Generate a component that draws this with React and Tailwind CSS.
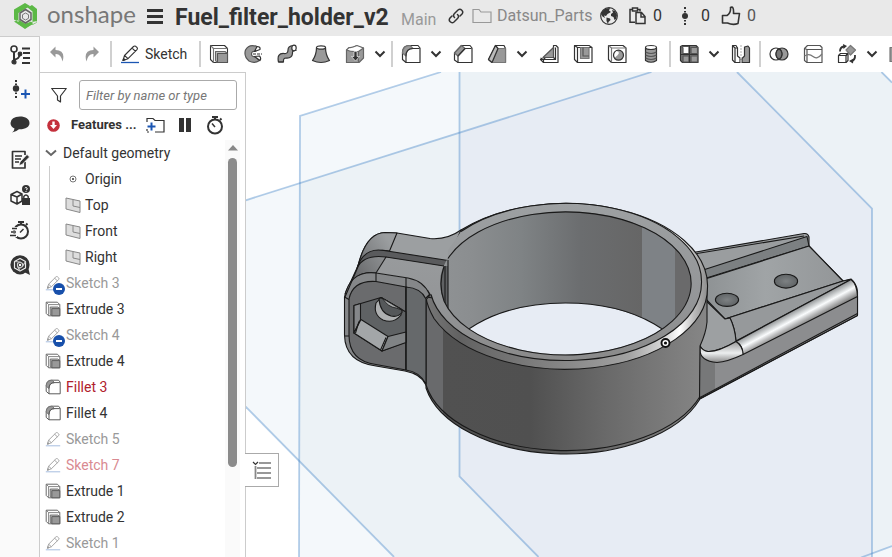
import React from "react";

const INK = "#333";
const GREY = "#999";

function Icon({ size = 20, label, children }) {
  return (
    <svg width={size} height={size} viewBox={`0 0 ${size} ${size}`} fill="none" stroke={INK} strokeWidth="1.2" strokeLinejoin="round" aria-label={label} className="shrink-0">
      {children}
    </svg>
  );
}

/* ---------- feature icons (20 x 20) ---------- */

const ExtrudeIcon = ({ size = 20, ink = INK }) => (
  <svg width={size} height={size} viewBox="0 0 20 20" fill="none" stroke={ink} strokeWidth="1.1" strokeLinejoin="round" className="shrink-0">
    <path d="M4.5 18.5 1.5 15.500V1.5h14l3 3v14z" fill="#fff" />
    <path d="M1.5 1.5l3 3V18.500M4.500 4.500H18.500" stroke="#777" />
    <path d="M8 18.500l-1.500-2V7.500h9.500l2.500 2" fill="#bbb" stroke="#666" />
    <path d="M8.500 9.500h10v9h-10z" fill={GREY} stroke="#555" />
  </svg>
);

const FilletIcon = ({ size = 20, ink = INK }) => (
  <svg width={size} height={size} viewBox="0 0 20 20" fill="none" stroke={ink} strokeWidth="1.2" strokeLinejoin="round" className="shrink-0">
    <path d="M1.500 15.500V8Q2 1.500 8 1.500h9l2 2.500v14.500H5z" fill="#fff" />
    <path d="M1.500 9Q2 1.500 9 1.500l3 3Q5 4.500 5 12z" fill={GREY} stroke="#777" />
    <path d="M5 18.500V12Q5 4.500 12 4.500h6.500" />
  </svg>
);

const PencilIcon = ({ size = 20, line = "#1b56b3", ink = INK }) => (
  <svg width={size} height={size} viewBox="0 0 20 20" fill="none" stroke={ink} strokeWidth="1.1" strokeLinejoin="round" className="shrink-0">
    <path d="M3 16.500l1.500-5L13.500 2.500Q14.500 1.500 15.700 2.300L17 3.500Q18 4.500 17 5.700L8 14.700z M4.500 11.500l3.500 3.200M12 4l3.500 3.300" />
    <path d="M3 16.500l.6-2 1.400 1.300z" fill={ink} />
    <path d="M1 18.500h18" stroke={line} strokeWidth="1.300" />
  </svg>
);

const PlaneIcon = () => (
  <svg width="16" height="16" viewBox="0 0 16 16" fill="#ddd" stroke="#888" className="shrink-0">
    <path d="M1 1l14 3v11.500L1 12z" />
    <path d="M8 2.500v6.500l7 1.500" fill="none" />
  </svg>
);

const OriginIcon = () => (
  <svg width="16" height="16" viewBox="0 0 16 16" fill="none" stroke="#777" className="shrink-0">
    <circle cx="8" cy="8" r="3" />
    <circle cx="8" cy="8" r="1" fill={INK} stroke="none" />
  </svg>
);

const RevolveIcon = () => (
  <Icon>
    <path d="M14 2.500Q6-.5 2.500 6Q.5 12.500 6 17Q11.500 20 16.500 16.500L12 12.500Q8.500 13 8.500 10T12 7.500L16 5z" fill={GREY} stroke="#555" />
    <path d="M11.500 7.500L14 2.500q3.500 0 3 3zM11.500 12.500l5-.5q2 2 .5 4.500z" fill="#fff" />
    <path d="M10 10h9" strokeDasharray="3 1" />
  </Icon>
);
const SweepIcon = () => (
  <Icon>
    <path d="M1.500 18Q-.5 9 7 9.500Q11 10 11 6Q11 2 16 1.500L19 6.500Q15 6 15.500 9.500Q15 14.500 9 14Q6 14 6.500 18z" fill={GREY} />
    <ellipse cx="17" cy="4" rx="2.200" ry="2.800" fill="#fff" />
    <path d="M1.500 18h5" />
  </Icon>
);
const LoftIcon = () => (
  <Icon>
    <path d="M5.500 3.500Q5.500 11 1.500 16.500Q10 20.500 18.500 16.500Q14.500 11 14.500 3.500z" fill={GREY} />
    <ellipse cx="10" cy="3.500" rx="4.500" ry="1.700" fill="#fff" />
  </Icon>
);
const ThickenIcon = () => (
  <Icon>
    <path d="M1.500 6L11 2l7.500 2v10L14 18.500H1.500z" fill={GREY} stroke="#666" />
    <path d="M1.500 6Q6 8 13.500 7.500L18.500 4 12 1.500Q7 4 4 3.500z" fill="#fff" stroke="#666" />
    <path d="M13.500 7.500v11" stroke="#666" />
    <path d="M9 7.500v5H6.500L10.500 17l4-4.500H12V7.500z" fill={INK} stroke="#fff" strokeWidth=".6" />
  </Icon>
);
const ChamferIcon = () => (
  <Icon>
    <path d="M1.500 16V9l7-7.500h8.500L19 4v14.500H5z" fill="#fff" />
    <path d="M1.500 9l7-7.500 3.500 3L5 12z" fill={GREY} stroke="#666" />
    <path d="M5 18.500V12l7-7.500h6.500" />
  </Icon>
);
const DraftIcon = () => (
  <Icon>
    <path d="M1.500 15.500L8.500 1.500h8.500l1.500 3v14H5z" fill="#fff" />
    <path d="M5 18.500L11 4.500h7.500v14z" fill={GREY} stroke="#777" />
    <path d="M8.500 1.500l2.500 3L5 18.500 1.500 15.500z" fill="#bbb" />
  </Icon>
);
const RibIcon = () => (
  <Icon>
    <path d="M1.500 15.500h3L14.500 5V1.500h2.500l2 2v15H4.500z" fill="#fff" />
    <path d="M4 13.500L14.500 3.500V13.500z" fill={GREY} stroke="#555" />
    <path d="M1.500 14l3 1.500h12v-12M4.500 15.500v3M16.500 15.500l-2-2" />
  </Icon>
);
const ShellIcon = () => (
  <Icon>
    <path d="M1.500 15.500v-14H16l3 2v15H4.500z" fill="#fff" />
    <path d="M1.500 1.500l3 2V18M4.500 3.500H19" />
    <path d="M7.500 3.500h8.500v11H7.500z" fill={GREY} stroke="#777" />
    <path d="M10 3.500v8.500h6" stroke="#555" />
  </Icon>
);
const HoleIcon = () => (
  <Icon>
    <path d="M1.500 15.500v-14H16l3 2.500v14.500H4.500z" fill="#fff" />
    <path d="M1.500 1.500L4.500 4v14.500M4.500 4H19" stroke="#777" />
    <circle cx="11.500" cy="11.200" r="5" fill={GREY} />
    <path d="M9.500 7Q15 8 8 13.500Q6 10 9.500 7z" fill="#fff" stroke="none" />
  </Icon>
);
const ThreadIcon = () => (
  <Icon>
    <path d="M4.500 4v12.500Q10 20 15.500 16.500V4z" fill={GREY} />
    <path d="M4.500 8q5.500 3 11 0M4.500 11q5.500 3 11 0M4.500 14q5.500 3 11 0" stroke="#555" />
    <ellipse cx="10" cy="3.500" rx="5.500" ry="2" fill="#fff" />
  </Icon>
);
const PatternIcon = () => (
  <Icon>
    <path d="M1.500 16.500v-14l2-1H17l2 2v15H3.500z" fill="#777" />
    <path d="M2.500 2.500L4 4v5.500h6V2.500z" fill="#fff" stroke="#555" />
    <path d="M12 3.500h6.500v6H12zM4 12h6v6H4zM12 12h6.500v6H12z" fill={GREY} stroke="#555" />
    <path d="M10.500 1.500v17M1.500 10.500h17" />
  </Icon>
);
const MirrorIcon = () => (
  <Icon>
    <path d="M1.500 16V1.500h3.500L6.500 4v8L9 14v4.500H4z" fill="#fff" />
    <path d="M1.500 1.500L4 4v14.500M4 4h2.500" />
    <path d="M18.500 18.500V4L17 2l-3.500 1v9L11 14.500v4z" fill={GREY} />
    <path d="M10 1v18" stroke="#bbb" strokeDasharray="2 1" />
  </Icon>
);
const BooleanIcon = () => (
  <Icon>
    <circle cx="13" cy="10" r="6" fill={GREY} />
    <circle cx="7" cy="10" r="6" />
    <path d="M10 4.800A6 6 0 0 1 10 15.200 6 6 0 0 1 10 4.800z" fill="#777" />
  </Icon>
);
const SplitIcon = () => (
  <Icon>
    <path d="M1.500 4.500l3-3H17l2 2v15H4l-2.500-2z" fill="#fff" stroke="#555" />
    <path d="M1.500 4.500L4 5.500h15M4 5.500v13" stroke="#555" />
    <path d="M1.500 12Q6 9 10 12.500T19 10" stroke="#777" />
  </Icon>
);
const TransformIcon = () => (
  <Icon>
    <path d="M1.500 18.500v-7l2-2h7l-1.500 2v7z" fill="#fff" />
    <path d="M1.500 11.500H9L11 9.500v7l-2 2" />
    <path d="M13.500 1.500l5 4.500-5 5-4.500-5z" fill={GREY} stroke="#777" />
    <path d="M3 7.500Q3 3 7 2.500M18 11Q18.500 16 14 17.500" strokeWidth="1.800" />
    <path d="M6 0l4 2-3.500 3zM16.500 14.500L12 17l4 2.500z" fill={INK} stroke="none" />
  </Icon>
);

const UndoIcon = ({ flip }) => (
  <svg width="16" height="16" viewBox="0 0 16 16" fill={GREY} className={flip ? "-scale-x-100" : ""}>
    <path d="M6.500.5L1 6l5.500 5.500V8Q12 7.500 13.500 15.500 17 4.500 6.500 4z" />
  </svg>
);

/* ---------- toolbar pieces ---------- */

function Tool({ label, children }) {
  return (
    <button type="button" aria-label={label} className="flex h-9 w-[34px] shrink-0 items-center justify-center">
      {children}
    </button>
  );
}
function Caret({ label }) {
  return (
    <button type="button" aria-label={label} className="mr-0.5 flex h-9 w-4 shrink-0 items-center justify-center">
      <svg width="12" height="8" viewBox="0 0 12 8" fill="none" stroke={INK} strokeWidth="2">
        <path d="M1.500 1.500L6 6l4.500-4.500" />
      </svg>
    </button>
  );
}
const Sep = () => <span className="mx-px h-[26px] w-0.5 shrink-0 bg-[#d0d0d0]" />;

function Toolbar() {
  return (
    <div role="toolbar" className="flex h-9 min-w-0 flex-1 items-center overflow-hidden bg-white">
      <Tool label="Undo"><UndoIcon /></Tool>
      <span className="w-px shrink-0" />
      <Tool label="Redo"><UndoIcon flip /></Tool>
      <Sep />
      <button type="button" className="flex h-9 w-[85px] shrink-0 items-center gap-[5px] pl-[7px] text-sm">
        <PencilIcon /><span>Sketch</span>
      </button>
      <Sep />
      <Tool label="Extrude"><ExtrudeIcon /></Tool>
      <Tool label="Revolve"><RevolveIcon /></Tool>
      <Tool label="Sweep"><SweepIcon /></Tool>
      <Tool label="Loft"><LoftIcon /></Tool>
      <Tool label="Thicken"><ThickenIcon /></Tool>
      <Caret label="More thicken tools" />
      <Sep />
      <Tool label="Fillet"><FilletIcon /></Tool>
      <Caret label="More fillet tools" />
      <Tool label="Chamfer"><ChamferIcon /></Tool>
      <Tool label="Draft"><DraftIcon /></Tool>
      <Caret label="More draft tools" />
      <Tool label="Rib"><RibIcon /></Tool>
      <Tool label="Shell"><ShellIcon /></Tool>
      <Tool label="Hole"><HoleIcon /></Tool>
      <Tool label="Thread"><ThreadIcon /></Tool>
      <Sep />
      <Tool label="Pattern"><PatternIcon /></Tool>
      <Caret label="More pattern tools" />
      <Tool label="Mirror"><MirrorIcon /></Tool>
      <Sep />
      <Tool label="Boolean"><BooleanIcon /></Tool>
      <Tool label="Split"><SplitIcon /></Tool>
      <Tool label="Transform"><TransformIcon /></Tool>
      <Caret label="More transform tools" />
      <Tool label="Delete face"><Icon><path d="M1 3.500h18v14H1z" fill={GREY} stroke="#777" /></Icon></Tool>
    </div>
  );
}

/* ---------- header ---------- */

function Header() {
  return (
    <header className="flex h-9 shrink-0 items-center overflow-hidden whitespace-nowrap bg-[#e9e9e9] pb-1">
      <a href="#home" aria-label="Onshape home" className="flex w-[147px] shrink-0 items-center gap-[9px] pl-[13px]">
        <svg width="25" height="28" viewBox="0 0 25 28" fill="#5cb946" className="shrink-0">
          <path d="M1 7.500L12 1l5 3-11.500 7v9L1 17.500zM14.500 5.500L19 3l5 4v13.500l-4.500 2.500V9.500zM1 19.500l11 6.500 12-6v-1L12 21.500 6 18z" />
          <path d="M1 19.500l5 2.500 6 .5 6-3 1.500 2.500-7.500 5z" />
          <path d="M12.500 7.500L18 11v6.500L12.500 21 7 17.500V11z" fill="#e9e9e9" stroke="#666" strokeWidth="1.500" />
          <path d="M12.500 11l3 1.700v3.600l-3 1.700-3-1.700v-3.600z" fill="none" stroke="#777" />
        </svg>
        <span className="pb-1 font-['Lato'] text-2xl leading-7 text-[#777]">onshape</span>
      </a>
      <button type="button" aria-label="Menu" className="flex w-4 shrink-0 flex-col gap-[3px]">
        <span className="h-[3px] bg-[#333]" /><span className="h-[3px] bg-[#333]" /><span className="h-[3px] bg-[#333]" />
      </button>
      <h1 className="ml-3 w-[218px] shrink-0 pt-1 text-[23px] leading-7 font-bold">Fuel_filter_holder_v2</h1>
      <span className="ml-2 w-[39px] shrink-0 pt-2 text-base leading-6 text-[#999]">Main</span>
      <button type="button" aria-label="Copy link" className="ml-2 shrink-0">
        <svg width="16" height="16" viewBox="0 0 16 16" fill="none" stroke={INK} strokeWidth="1.500" strokeLinecap="round">
          <path d="M6.500 9.500Q4.500 7.500 6.500 5.500L10 2Q12 .5 13.800 2.200T14 6L12 8" />
          <path d="M9.500 6.500Q11.500 8.500 9.500 10.500L6 14Q4 15.500 2.200 13.800T2 10L4 8" />
        </svg>
      </button>
      <a href="#folder" className="ml-2 flex w-[120px] shrink-0 items-center gap-[5px] text-base text-[#888]">
        <svg width="20" height="16" viewBox="0 0 20 16" fill="none" stroke="#999" strokeWidth="1.200" className="shrink-0">
          <path d="M1 14.500v-13h6l2 2.500h10v10.500z" />
        </svg>
        Datsun_Parts
      </a>
      <svg width="18" height="18" viewBox="0 0 18 18" className="ml-2 shrink-0" fill={INK}>
        <circle cx="9" cy="9" r="8.300" fill="#e9e9e9" stroke={INK} strokeWidth="1.200" />
        <path d="M1 7Q2 3 6 1.500L10 1 9 3.500 11 5 7.500 7 6 9 4 8.500 5 11 2.500 9.500zM6.500 10.500L10 11.500 10.500 13 8.500 15 8 17 6.500 14zM12 3l3 1 2 4-1 4-1.500 1-1-3-2.500-1 0-2 2-1.500z" />
      </svg>
      <svg width="19" height="18" viewBox="0 0 19 18" className="ml-[10px] shrink-0" fill="none" stroke={INK} strokeWidth="1.500">
        <path d="M7 15.200H2V2.500h2M10 2.500h2v2M4.500 1h5v3h-5z" />
        <path d="M8 5.500h5.500l3.500 4v7H8zM13 5.500V10h4" />
      </svg>
      <span className="ml-1.5 w-3 text-base">0</span>
      <svg width="8" height="20" viewBox="0 0 8 20" className="ml-4 shrink-0" fill={INK}>
        <circle cx="4" cy="10" r="3" />
        <path d="M3 1h2v2H3zM3 5h2v1.500H3zM3 14h2v1.500H3zM3 17h2v2H3z" />
      </svg>
      <span className="ml-3 w-3 text-base">0</span>
      <button type="button" aria-label="Like" className="ml-2 shrink-0">
        <svg width="20" height="20" viewBox="0 0 20 20" fill="none" stroke={INK} strokeWidth="1.600" strokeLinejoin="round">
          <path d="M1.500 9.500H6Q10 7 9.500 1.500 13-.5 12.500 7.500H18.500L17 17.500Q12 19.500 6.500 17H1.500z" />
        </svg>
      </button>
      <span className="ml-1.5 text-base text-[#555]">0</span>
    </header>
  );
}

/* ---------- left rail ---------- */

function RailButton({ label, children }) {
  return (
    <button type="button" aria-label={label} className="flex h-[35px] w-full shrink-0 items-center justify-center">
      {children}
    </button>
  );
}

const StopwatchShape = ({ cx = 10 }) => (
  <>
    <circle cx={cx} cy="11.500" r="7" strokeWidth="2" />
    <path d={`M${cx - 3} 2h6M${cx} 2v3M${cx + 5} 5l1.500-1.500`} strokeWidth="2" />
  </>
);

function Rail() {
  return (
    <nav className="flex w-10 shrink-0 flex-col border-t border-r border-[#ccc] bg-[#fafafa]">
      <RailButton label="Feature list">
        <Icon>
          <g strokeWidth="2">
            <circle cx="4" cy="4" r="3" strokeWidth="1.600" />
            <path d="M4 7v10M4.500 14.500Q9 14 9.500 10" />
            <path d="M12 3.500h8M13 8h7M13 13h7M12 18h8" />
          </g>
          <circle cx="4" cy="17" r="2" fill={INK} />
          <circle cx="10" cy="9" r="1.800" fill={INK} />
        </Icon>
      </RailButton>
      <RailButton label="Insert version">
        <Icon>
          <circle cx="6" cy="8.500" r="3.200" fill={INK} stroke="none" />
          <path d="M6 0v2M6 3.500v1.500M6 12.500v1.500M6 16v2" strokeWidth="2" />
          <path d="M11 14h9M15.500 9.500v9" stroke="#1b56b3" strokeWidth="2" />
        </Icon>
      </RailButton>
      <RailButton label="Comments">
        <Icon>
          <path d="M10 1.500C15.500 1.500 19.500 4 19.500 8S15.500 14.500 9 14.300Q6 17 2 17.500 4.500 15.500 4.500 13.500 .5 11.500.5 8 1 1.500 10 1.500z" fill={INK} stroke="none" />
        </Icon>
      </RailButton>
      <RailButton label="Notes">
        <Icon>
          <path d="M15 12v6H2.500v-16.500H15V5" strokeWidth="1.700" />
          <path d="M5 6h7M5 9h6M5 12h4" strokeWidth="1.500" />
          <path d="M9 15.500l1-3.500L17 4.500l2.500 2.500-7.500 7.500z" fill={INK} stroke="#fafafa" strokeWidth=".7" />
        </Icon>
      </RailButton>
      <RailButton label="Permissions">
        <Icon>
          <path d="M1 9.500l6-3 5 2.500v7L7 19l-6-3zM1 9.500L7 12l5-3M7 12v7" strokeWidth="1.500" />
          <circle cx="16" cy="4" r="4" fill={INK} stroke="none" />
          <path d="M14.800 3.200Q16 1.500 17 3T16 5M16 6v1" stroke="#fff" strokeWidth=".9" />
          <path d="M12 13h8v7h-8z" fill={INK} stroke="none" />
          <path d="M13.800 13v-1.500Q16 8.500 18.200 11.500V13" strokeWidth="1.400" />
        </Icon>
      </RailButton>
      <RailButton label="Performance">
        <Icon>
          <StopwatchShape cx={11} />
          <path d="M0 8.500h7M0 12h6M0 15.500h7" stroke="#fafafa" strokeWidth="3" />
          <path d="M2 8.500h5M1 12h5M0 15.500h6" strokeWidth="1.300" />
          <path d="M10 12.500l3.500-3.500" strokeWidth="1.500" />
        </Icon>
      </RailButton>
      <RailButton label="Assistant">
        <Icon>
          <circle cx="10" cy="9.800" r="9.600" fill={INK} stroke="none" />
          <path d="M12 16l8 4-2-8z" fill={INK} stroke="none" />
          <path d="M10 3.500l5.500 3v6.500L10 16l-5.500-3V6.500z" stroke="#eee" />
          <path d="M10 7l2.500 1.500v3L10 13l-2.500-1.500v-3zM4.500 6.500l5.500.500M15.500 6.500l-3 5M10 16l-2.500-4.500" stroke="#ccc" />
          <circle cx="10" cy="10" r="1.200" fill="#fff" stroke="none" />
        </Icon>
      </RailButton>
    </nav>
  );
}

/* ---------- feature tree ---------- */

const GEOMETRY = [
  ["Origin", OriginIcon],
  ["Top", PlaneIcon],
  ["Front", PlaneIcon],
  ["Right", PlaneIcon],
];

const FEATURES = [
  { name: "Sketch 3", kind: "sketch", tone: "text-[#999]", hidden: true },
  { name: "Extrude 3", kind: "extrude", tone: "" },
  { name: "Sketch 4", kind: "sketch", tone: "text-[#999]", hidden: true },
  { name: "Extrude 4", kind: "extrude", tone: "" },
  { name: "Fillet 3", kind: "fillet", tone: "text-[#b0202c]" },
  { name: "Fillet 4", kind: "fillet", tone: "" },
  { name: "Sketch 5", kind: "sketch", tone: "text-[#999]" },
  { name: "Sketch 7", kind: "sketch", tone: "text-[#d98a91]" },
  { name: "Extrude 1", kind: "extrude", tone: "" },
  { name: "Extrude 2", kind: "extrude", tone: "" },
  { name: "Sketch 1", kind: "sketch", tone: "text-[#999]" },
];

function FeatureIcon({ kind, hidden }) {
  return (
    <span className="relative flex">
      {kind === "sketch" && <PencilIcon size={16} ink="#999" line="#a9bfe0" />}
      {kind === "extrude" && <ExtrudeIcon size={16} ink="#555" />}
      {kind === "fillet" && <FilletIcon size={16} ink="#555" />}
      {hidden && (
        <svg width="12" height="12" viewBox="0 0 12 12" className="absolute -right-1 -bottom-1">
          <circle cx="6" cy="6" r="6" fill="#1850ab" />
          <path d="M3 6h6" stroke="#fff" strokeWidth="2" />
        </svg>
      )}
    </span>
  );
}

function FeaturePanel() {
  return (
    <aside className="flex w-[205px] shrink-0 flex-col border-t border-[#ccc] bg-white">
      <div className="flex items-center gap-3 pt-[7px] pr-2 pl-[11px]">
        <svg width="16" height="16" viewBox="0 0 16 16" fill="none" stroke={INK} strokeWidth="1.200" strokeLinejoin="round" className="shrink-0">
          <path d="M.7 1.500h14.600L9.500 9v6L6.500 13V9z" />
        </svg>
        <input
          type="text"
          aria-label="Filter features"
          placeholder="Filter by name or type"
          className="h-[30px] min-w-0 flex-1 rounded-[3px] border border-[#aaa] px-1.5 text-[13px] italic placeholder:text-[#777]"
        />
      </div>
      <div className="flex h-[30px] items-center pl-[7px]">
        <svg width="13" height="13" viewBox="0 0 13 13" className="shrink-0">
          <circle cx="6.500" cy="6.500" r="6.300" fill="#c4303c" />
          <path d="M5.300 2.500h2.400v3.500h2.300L6.500 10 3 6h2.300z" fill="#fff" />
        </svg>
        <h2 className="ml-[11px] w-[75px] text-[13px] font-bold">Features ...</h2>
        <button type="button" aria-label="Add folder">
          <svg width="19" height="16" viewBox="0 0 19 16" fill="none" stroke={INK} strokeWidth="1.200">
            <path d="M1 5V1.500h6l2 2h9v11.500H9" />
            <path d="M1 12v3h2" strokeDasharray="2 1" />
            <path d="M1.500 9.500h8M5.500 5.500v8" stroke="#1b56b3" strokeWidth="2" />
          </svg>
        </button>
        <button type="button" aria-label="Pause" className="ml-[14px] flex w-3 justify-between">
          <span className="h-3.5 w-[5px] bg-[#333]" /><span className="h-3.5 w-[5px] bg-[#333]" />
        </button>
        <button type="button" aria-label="Regeneration times" className="ml-[14px]">
          <Icon><StopwatchShape /><path d="M10 12L7 8.500" strokeWidth="1.500" /></Icon>
        </button>
      </div>
      <div className="flex min-h-0 flex-1">
        <div className="min-w-0 flex-1 overflow-hidden pl-[5px] text-sm">
          <button type="button" className="flex h-[26px] items-center gap-[6px]">
            <svg width="12" height="8" viewBox="0 0 12 8" fill="none" stroke="#666" strokeWidth="2"><path d="M1 1.500l5 4.500 5-4.500" /></svg>
            Default geometry
          </button>
          <ul className="ml-1 border-l border-[#ccc]">
            {GEOMETRY.map(([name, Glyph]) => (
              <li key={name}>
                <button type="button" className="flex h-[26px] items-center gap-1 pl-[15px]"><Glyph />{name}</button>
              </li>
            ))}
          </ul>
          <ul>
            {FEATURES.map((f) => (
              <li key={f.name}>
                <button type="button" className={`flex h-[26px] items-center gap-[5px] ${f.tone}`}>
                  <FeatureIcon kind={f.kind} hidden={f.hidden} />{f.name}
                </button>
              </li>
            ))}
          </ul>
        </div>
        <div aria-hidden="true" className="mr-[5px] flex w-[15px] shrink-0 flex-col items-center bg-[#fafafa] pt-[5px]">
          <svg width="10" height="6" viewBox="0 0 10 6" fill="#888" className="shrink-0"><path d="M0 5.500L5 0l5 5.500z" /></svg>
          <span className="mt-[7px] h-3/4 w-[9px] rounded-full bg-[#8b8b8b]" />
        </div>
      </div>
    </aside>
  );
}

/* ---------- 3D viewport ---------- */

function Model() {
  return (
    <svg viewBox="246 72 646 485" preserveAspectRatio="xMinYMin slice" className="block h-full w-full" role="img" aria-label="Fuel filter holder">
      <defs>
        <linearGradient id="body" gradientUnits="userSpaceOnUse" x1="443" y1="0" x2="707" y2="0">
          <stop offset="0" stopColor="#515151" /><stop offset=".33" stopColor="#505050" /><stop offset=".6" stopColor="#686868" /><stop offset="1" stopColor="#868686" />
        </linearGradient>
        <linearGradient id="wall" gradientUnits="userSpaceOnUse" x1="440" y1="0" x2="642" y2="0">
          <stop offset="0" stopColor="#8f9294" /><stop offset=".15" stopColor="#8b8e90" /><stop offset=".4" stopColor="#7f8385" /><stop offset=".7" stopColor="#6b6d6f" /><stop offset="1" stopColor="#666" />
        </linearGradient>
        <linearGradient id="face" x1="0" y1="0" x2="0" y2="1">
          <stop offset="0" stopColor="#9da0a2" /><stop offset=".6" stopColor="#949698" /><stop offset="1" stopColor="#8a8a8a" />
        </linearGradient>
        <linearGradient id="rim" gradientUnits="userSpaceOnUse" x1="426" y1="0" x2="708" y2="0">
          <stop offset="0" stopColor="#777" /><stop offset=".12" stopColor="#626262" /><stop offset=".5" stopColor="#888" /><stop offset=".72" stopColor="#a2a2a2" /><stop offset=".86" stopColor="#e0e0e0" /><stop offset=".9" stopColor="#fff" /><stop offset=".95" stopColor="#bbb" /><stop offset="1" stopColor="#8c8c8c" />
        </linearGradient>
        <linearGradient id="rail" gradientUnits="userSpaceOnUse" x1="792" y1="311" x2="800" y2="326">
          <stop offset="0" stopColor="#8f9294" /><stop offset=".3" stopColor="#cfd2d3" /><stop offset=".5" stopColor="#fafcfd" /><stop offset=".72" stopColor="#c4c5c6" /><stop offset="1" stopColor="#868686" />
        </linearGradient>
        <linearGradient id="bend" x1="0" y1="0" x2="0" y2="1">
          <stop offset="0" stopColor="#999" /><stop offset=".55" stopColor="#eceeef" /><stop offset="1" stopColor="#888" />
        </linearGradient>
        <linearGradient id="lugTop" gradientUnits="userSpaceOnUse" x1="350" y1="280" x2="395" y2="250">
          <stop offset="0" stopColor="#606163" /><stop offset="1" stopColor="#9b9ea0" />
        </linearGradient>
        <linearGradient id="floor" x1="0" y1="0" x2="1" y2="0">
          <stop offset="0" stopColor="#8d9193" /><stop offset=".45" stopColor="#a0a4a6" /><stop offset="1" stopColor="#939698" />
        </linearGradient>
        <radialGradient id="bore"><stop offset="0" stopColor="#7d8183" /><stop offset="1" stopColor="#606466" /></radialGradient>
        <clipPath id="opening"><ellipse cx="565.500" cy="283" rx="125.500" ry="71.500" /></clipPath>
      </defs>

      {/* datum planes */}
      <path d="M245 72H892V557H245z" fill="#fff" />
      <path d="M300 116L441 72H882L892 82V557H299zM245 200L300 183V463L245 406z" fill="#f4f8fb" />
      <path d="M300 183L459.500 132V72H882L892 82V546L862 557H394L300 463z" fill="#ecf2f6" />
      <path d="M459.500 132.500L651 72H737L872 208.500V557H538L459.500 477z" fill="#e7ecf4" />
      <g fill="none" stroke="#3b7fc4" strokeOpacity=".38" strokeWidth="1.800">
        <path d="M441 72L300 116 299 557" /><path d="M245 200.500L651.500 72" /><path d="M459.500 72V476.500L538.500 557" />
        <path d="M245 406L394 557" /><path d="M737 72L872 208.500V557" /><path d="M881.500 72L892 82.500" /><path d="M861 557.500L892 546" />
      </g>

      <g stroke="#191919" strokeWidth="1.100" strokeLinejoin="round" fill="none">
        {/* mounting bracket */}
        <path d="M690 253L804 233.500Q808 233 809 237V246L843 281 851 279Q857 284 857.500 292V315.500L699 399.500 690 320z" fill="#9a9d9f" />
        <path d="M700 271L807 236.500 809 246 700 280z" fill="#7c8082" />
        <path d="M697 253.500L804 236" />
        <path d="M702 280L809 246 843 281 725 319 702 295z" fill="url(#floor)" />
        <path d="M725 319L843 281 851 279.500 736 341Q735 328 730 318z" fill="#96999b" />
        <path d="M699 345L742 350 857.500 296V315.500L699 399z" fill="#8c8d8f" />
        <path d="M700 352L715 359V389L700 397z" fill="#777879" stroke="none" />
        <path d="M736 341.500L851 279.500Q857 284 857.500 296.500L743 354.500Q743 346 736 341.500z" fill="url(#rail)" />
        <path d="M700 295L725 319 730 318Q735 328 736 341.500Q718 352 708 351.500Q703 351 700 346z" fill="#9da0a2" />
        <path d="M700 346Q703 351 708 351.500 718 352 736 341.500 743 346 743 354.500 727 362 717 362.500 700 361 700 350z" fill="url(#bend)" />
        <path d="M857.500 313.500L700 397.500" />
        <ellipse cx="786" cy="281.200" rx="11.600" ry="6.900" fill="url(#bore)" />
        <ellipse cx="727" cy="299.800" rx="11.600" ry="6.600" fill="url(#bore)" />

        {/* rear lug and slot */}
        <path d="M358 266Q366 233 385 232.500L397 233 430 238.500Q447 240 461 230L480 260 448 262 389 253Z" fill="#9c9fa1" />
        <path d="M358 266Q366 233 385 232.500L397 233 389.500 251Q368 247 358 266z" fill="url(#lugTop)" />
        <path d="M357 268Q364 247 384 250.500L448 260.500V310H444V266.500L386 257.500z" fill="#5a5b5d" />

        {/* ring body */}
        <path d="M426 290L500 310 707 287.500V322Q706 333 700 346L699.500 399.800A142 81 0 0 1 426 388z" fill="url(#body)" />
        <path d="M426 295H443V413Q431 401 426 386z" fill="#696a6c" stroke="none" />
        <path d="M700 396.500A142 80 0 0 1 426 385" />

        {/* rim fillet and top face */}
        <path d="M426 297Q427 306 434 318.500A142 81.500 0 0 0 707.500 287.500A142 82 0 0 0 461 230L448 260V300z" fill="url(#rim)" />
        <path d="M461 231.500A136 78 0 0 1 701.500 283A136 77.500 0 0 1 431 294.500Q424 281 408 278L376 273 386 257 444 266 448 260.500V250z" fill="url(#face)" stroke="none" />
        <path d="M461 231.500A136 78 0 0 1 701.500 283A136 77.500 0 0 1 431 294.500" />

        {/* inner wall */}
        <g clipPath="url(#opening)">
          <path d="M440 205H700V360H440z" fill="url(#wall)" stroke="none" />
          <path d="M642 200H675V360H642z" fill="#7e8286" stroke="none" />
          <path d="M675 200H700V360H675z" fill="#6a6a6b" stroke="none" />
          <path d="M436 266H448V312H436z" fill="#606264" stroke="none" />
          <path d="M448 260V310M445 266V304" />
          <ellipse cx="565.500" cy="374.500" rx="125.500" ry="71.500" fill="#e7ecf4" />
        </g>
        <path d="M448 258.500A125.500 71.500 0 1 1 444 301Q438 284 444 266.500" />

        {/* front lug */}
        <path d="M386 257L444 266" />
        <path d="M357 268Q364 254 386 257L376 273Q354 270 345 294z" fill="url(#lugTop)" />
        <path d="M344.500 297Q350 270 376 273L408 278Q424 281 430 295L426 300V385Q421 374 405 371L376 366Q345 362 344.500 335z" fill="#858789" />
        <path d="M349 299Q353 280 376 281.500L406 287V370L376 364.500Q349 361 349 335z" fill="#6a6b6d" />
        <path d="M406 287Q421 288 426 299V384Q420 372 406 370z" fill="#66696b" />
        <path d="M376 273V281.500M406 278V287M344.500 297L349 299.500M345 336H349M430 294L426 298M360 262L345 297" />

        {/* hex pocket */}
        <path d="M354 305.500L381 297.500 406 312V342L382 351 354 333z" fill="#5f6264" />
        <path d="M354 305.500L360.500 303.500V319.500L354 333z" fill="#85878a" />
        <path d="M361 319.500L388 336.500 382 351 354 333z" fill="#a3a6a8" />
        <path d="M388 336.500L406 332V342.500L382 351z" fill="#808385" />
        <path d="M359 321.500L355.500 333M386 337.500L380.500 350" />
        <path d="M376 303Q373 315 383 320Q394 324 401 315V309L381 297.500Z" fill="#aeb0b1" />
        <path d="M379 299Q380 313 391 316Q398 317.500 402 312.500V310L381 297.500z" fill="#55585a" />
        <path d="M383 299Q388 307 396 308L402 310 381 297.500z" fill="#a7a9aa" strokeWidth=".8" />
        <path d="M406 287V370" />
      </g>

      {/* origin marker */}
      <circle cx="665.500" cy="343" r="4" fill="#fff" stroke="#111" strokeWidth="1.900" />
      <circle cx="665.500" cy="343" r="1.600" fill="#111" />
    </svg>
  );
}

function Viewport() {
  return (
    <main className="relative min-w-0 flex-1 border-l border-[#ccc]">
      <Model />
      <button type="button" aria-label="Show lists" className="absolute top-[381px] -left-px flex h-[34px] w-[34px] items-center justify-center border border-l-0 border-[#aaa] bg-white">
        <svg width="20" height="20" viewBox="0 0 20 20" fill="none" stroke={INK} strokeWidth="1.200">
          <path d="M1 2l2.500 2.500L6 2M7 3h12M5 8h14M5 13h14M5 18h14" />
          <path d="M3.500 6v13" stroke="#888" strokeWidth="1.800" />
        </svg>
      </button>
    </main>
  );
}

export default function App() {
  return (
    <div className="flex h-screen flex-col overflow-hidden bg-white font-['Roboto',sans-serif] text-[#333]">
      <Header />
      <div className="flex min-h-0 flex-1">
        <Rail />
        <div className="flex min-w-0 flex-1 flex-col">
          <div className="flex shrink-0"><Toolbar /></div>
          <div className="flex min-h-0 flex-1">
            <FeaturePanel />
            <Viewport />
          </div>
        </div>
      </div>
    </div>
  );
}
